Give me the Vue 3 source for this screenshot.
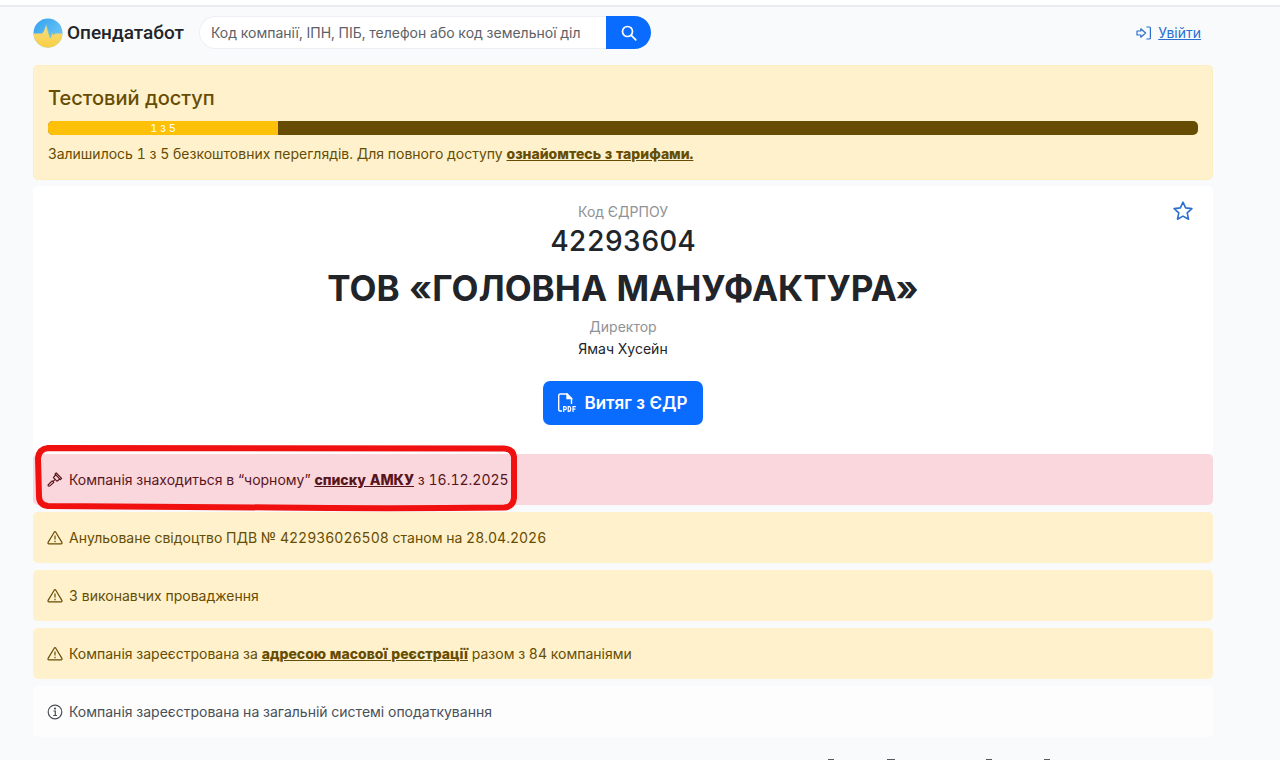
<template>
    <div class="page">
        <header class="header">
            <a class="logo" href="#">
                <svg width="30" height="30" viewBox="0 0 30 30" aria-hidden="true">
                    <defs>
                        <linearGradient id="sky" x1="0" y1="0" x2="1" y2="1">
                            <stop offset="0" stop-color="#2f9ff0" />
                            <stop offset="1" stop-color="#7fd0f5" />
                        </linearGradient>
                        <linearGradient id="field" x1="0" y1="0" x2="0" y2="1">
                            <stop offset="0" stop-color="#f3dc8c" />
                            <stop offset="1" stop-color="#fbcf3f" />
                        </linearGradient>
                        <clipPath id="round"><circle cx="15" cy="15" r="14.5" /></clipPath>
                    </defs>
                    <g clip-path="url(#round)">
                        <rect width="30" height="30" fill="url(#sky)" />
                        <path d="M0 15.5H9L11 13L13.2 6.5L16 16L17.4 20L19 14.5L20.5 16.5L22 15.5H30V30H0Z" fill="url(#field)" />
                        <path d="M13.2 6.5L16 16L17.4 20L19 14.5L20.5 16.5L22 15.5" fill="none" stroke="#7cc4c8" stroke-width="1" />
                    </g>
                </svg>
                <span>Опендатабот</span>
            </a>
            <form class="search" @submit.prevent>
                <input v-model="query" type="text" aria-label="Пошук" placeholder="Код компанії, ІПН, ПІБ, телефон або код земельної діл" />
                <button type="submit" aria-label="Знайти">
                    <svg width="16" height="16" viewBox="0 0 16 16" fill="none" stroke="currentColor" stroke-width="1.7" stroke-linecap="round">
                        <circle cx="6.5" cy="6.5" r="5" />
                        <path d="M10.3 10.3L14.8 14.8" />
                    </svg>
                </button>
            </form>
            <div class="login">
                <svg width="16" height="16" viewBox="0 0 16 16" fill="none" stroke="currentColor" stroke-width="1.2" stroke-linejoin="round" aria-hidden="true">
                    <path d="M1 6H4.8V3.8L9.6 8L4.8 12.2V10H1Z" />
                    <path d="M10.4 2H13.4Q14.4 2 14.4 3V13Q14.4 14 13.4 14H10.4" />
                </svg>
                <a href="#">Увійти</a>
            </div>
        </header>

        <main>
            <section class="trial">
                <h2>Тестовий доступ</h2>
                <div class="progress">
                    <div class="progress-bar" :style="{ width: (used / total) * 100 + '%' }">{{ used }} з {{ total }}</div>
                </div>
                <p>Залишилось {{ used }} з {{ total }} безкоштовних переглядів. Для повного доступу <a href="#">ознайомтесь з тарифами.</a></p>
            </section>

            <section class="company">
                <button class="favorite" type="button" aria-label="Додати в обране">
                    <svg width="20" height="20" viewBox="0 0 20 20" fill="none" stroke="currentColor" stroke-width="1.6" stroke-linejoin="round">
                        <path d="M10 1.2L12.6 6.9L18.9 7.6L14.2 11.9L15.5 18.2L10 15.1L4.5 18.2L5.8 11.9L1.1 7.6L7.4 6.9Z" />
                    </svg>
                </button>
                <div class="label">Код ЄДРПОУ</div>
                <div class="code">42293604</div>
                <h1>ТОВ «ГОЛОВНА МАНУФАКТУРА»</h1>
                <div class="label">Директор</div>
                <div class="director">Ямач Хусейн</div>
                <button class="extract" type="button">
                    <svg width="20" height="20" viewBox="0 0 20 20" fill="none" stroke="currentColor" stroke-width="1.4" aria-hidden="true">
                        <path d="M5 18H3.2Q1.7 18 1.7 16.5V2.5Q1.7 1 3.2 1H10L14.5 5.5V11" />
                        <path d="M10 1V5.5H14.5Z" fill="currentColor" />
                        <path d="M6.7 19V13.7H8Q9.3 13.7 9.3 15.2T8 16.6H6.7M11.2 13.7V18.4H12Q13.7 18.4 13.7 16T12 13.7ZM16 19V13.7H18.8M16 16.2H18.4" stroke-width="1.2" />
                    </svg>
                    <span>Витяг з ЄДР</span>
                </button>
            </section>

            <ul class="factors">
                <li v-for="item in factors" :key="item.text" :class="item.type">
                    <svg v-if="item.icon === 'gavel'" width="16" height="16" viewBox="0 0 16 16" fill="none" stroke="currentColor" stroke-width="1.2" stroke-linejoin="round" aria-hidden="true">
                        <path d="M9.2 1L14.6 6.4L13.4 7.6L8 2.2ZM8.6 2.8L6.4 5.6L10 9.2L12.8 7M8.2 7.4L6 9.6M5.2 8.8L6.8 10.4L3.2 13.6Q2 14.6 1.3 13.9T2 12Z" />
                    </svg>
                    <svg v-else-if="item.icon === 'info'" width="16" height="16" viewBox="0 0 16 16" fill="none" stroke="currentColor" stroke-width="1.2" aria-hidden="true">
                        <circle cx="8" cy="8" r="6.8" />
                        <path d="M6.4 7H8.3V11.4M6.2 11.5H10" />
                        <circle cx="8" cy="4.6" r="0.5" fill="currentColor" />
                    </svg>
                    <svg v-else width="16" height="16" viewBox="0 0 16 16" fill="none" stroke="currentColor" stroke-width="1.2" stroke-linejoin="round" aria-hidden="true">
                        <path d="M7.2 2.2Q8 1 8.8 2.2L14.9 12.4Q15.4 13.8 14 13.9H2Q0.6 13.8 1.1 12.4Z" />
                        <path d="M8 5.4V9.6M8 10.8V12.2" />
                    </svg>
                    <span>{{ item.text }}<template v-if="item.link">&nbsp;<a href="#">{{ item.link }}</a> {{ item.after }}</template></span>
                    <svg v-if="item.marked" class="marker" viewBox="0 0 484 68" preserveAspectRatio="none" aria-hidden="true">
                        <path d="M14 4Q240 5 470 4.5Q479 5 480 13L480 54Q479 63 470 63.5Q350 65 240 63.5L14 62Q5 61 5 52L4 14Q5 5 14 4Z" />
                    </svg>
                </li>
            </ul>

            <svg class="next-edge" width="222" height="1" viewBox="0 0 222 1" aria-hidden="true">
                <path d="M0 0H6V1H0ZM59 0H67V1H59ZM158 0H164V1H158ZM216 0H222V1H216Z" />
            </svg>
        </main>
    </div>
</template>

<script setup>
import { ref } from 'vue';

const query = ref('');
const used = 1;
const total = 5;

const factors = [
    { type: 'danger', icon: 'gavel', text: 'Компанія знаходиться в “чорному”', link: 'списку АМКУ', after: 'з 16.12.2025', marked: true },
    { type: 'warning', icon: 'alert', text: 'Анульоване свідоцтво ПДВ № 422936026508 станом на 28.04.2026' },
    { type: 'warning', icon: 'alert', text: '3 виконавчих провадження' },
    { type: 'warning', icon: 'alert', text: 'Компанія зареєстрована за', link: 'адресою масової реєстрації', after: 'разом з 84 компаніями' },
    { type: 'light', icon: 'info', text: 'Компанія зареєстрована на загальній системі оподаткування' },
];
</script>

<style>
body {
    margin: 0;
    background: #f8fafc;
}
</style>

<style scoped>
.page {
    border-top: 5px solid #fff;
    padding: 0 67px 0 33px;
    font-family: Inter, "Liberation Sans", sans-serif;
    font-size: 14px;
    font-variant-numeric: tabular-nums;
    line-height: 22px;
    color: #212529;
    box-shadow: inset 0 2px #e9ebee;
}

.header {
    display: flex;
    align-items: center;
    padding: 11px 0 16px;
}

.logo {
    display: flex;
    flex-shrink: 0;
    align-items: center;
    gap: 4px;
    width: 151px;
    margin-right: 15px;
    color: #212529;
    font: 500 19px/30px Roboto, sans-serif;
    text-decoration: none;
}

.logo svg {
    flex-shrink: 0;
}

.search {
    display: flex;
    width: 452px;
    height: 33px;
}

.search input {
    box-sizing: border-box;
    flex: 1;
    min-width: 0;
    padding: 1px 11px 0;
    border: 1px solid #eceff3;
    border-right: 0;
    border-radius: 17px 0 0 17px;
    background: #fff;
    font: inherit;
}

.search input::placeholder {
    color: #5c6166;
    opacity: 1;
}

.search button {
    display: flex;
    align-items: center;
    justify-content: center;
    width: 45px;
    padding: 0;
    border: 0;
    border-radius: 0 17px 17px 0;
    background: #0a6cff;
    color: #fff;
}

.login {
    display: flex;
    align-items: center;
    gap: 6px;
    margin-left: auto;
    margin-right: 12px;
    color: #2b6fd0;
}

.login a {
    color: inherit;
}

.trial {
    box-sizing: border-box;
    padding: 19px 14px 14px;
    border: 1px solid #fdeec0;
    border-radius: 5px;
    background: #fff1cc;
    color: #664d03;
}

.trial h2 {
    margin: 0 0 10px;
    font-size: 20px;
    font-weight: 500;
    line-height: 26px;
}

.trial p {
    margin: 8px 0 0;
}

.trial a,
.factors a {
    color: inherit;
    font-weight: 800;
}

.progress {
    height: 14px;
    overflow: hidden;
    border-radius: 5px;
    background: #664d03;
}

.progress-bar {
    height: 14px;
    background: #ffc107;
    color: #fff;
    font-size: 11px;
    line-height: 14px;
    text-align: center;
}

.company {
    position: relative;
    display: flex;
    flex-direction: column;
    align-items: center;
    margin-top: 6px;
    padding: 15px 15px 29px;
    border-radius: 5px;
    background: #fff;
    text-align: center;
}

.favorite {
    position: absolute;
    top: 15px;
    right: 20px;
    padding: 0;
    border: 0;
    background: none;
    color: #2b6fd0;
    line-height: 0;
}

.label {
    color: #8f9296;
}

.code {
    font-size: 28px;
    font-weight: 500;
    line-height: 37px;
}

.company h1 {
    margin: 6px 0;
    font-size: 35px;
    font-weight: 700;
    line-height: 44px;
}

.extract {
    display: flex;
    align-items: center;
    gap: 7px;
    height: 44px;
    margin-top: 21px;
    padding: 0 15px 0 14px;
    border: 0;
    border-radius: 7px;
    background: #0a6cff;
    color: #fff;
    font: inherit;
    font-size: 17px;
    font-weight: 600;
}

.factors {
    display: flex;
    flex-direction: column;
    gap: 7px;
    margin: 0;
    padding: 0;
    list-style: none;
}

.factors li {
    position: relative;
    display: flex;
    align-items: center;
    gap: 6px;
    min-height: 51px;
    padding: 0 14px;
    border-radius: 5px;
}

.danger {
    background: #fad7dc;
    color: #58151c;
}

.warning {
    background: #fff1cc;
    color: #664d03;
}

.light {
    background: #fdfdfd;
    color: #495057;
}

.marker {
    position: absolute;
    top: -10px;
    left: 1px;
    width: 484px;
    height: 68px;
    fill: none;
    stroke: #f01010;
    stroke-width: 6;
}

.next-edge {
    display: block;
    margin: 22px 163px 0 auto;
    fill: #55585c;
}
</style>
